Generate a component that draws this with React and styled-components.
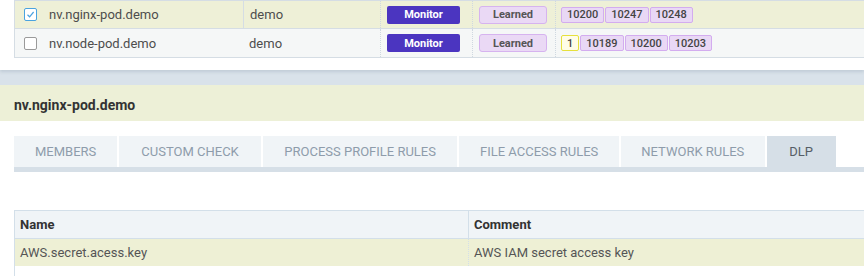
import React from 'react';
import styled, { createGlobalStyle } from 'styled-components';

const GlobalStyle = createGlobalStyle`
    body {
        margin: 0;
        background: #d9e2ea;
        font-family: Roboto, "Liberation Sans", Arial, sans-serif;
        color: #4a4a4a;
    }
`;

const Card = styled.div`
    background: #fff;
    padding: 0 0 12px 14px;
    box-shadow: 0 2px 3px rgba(120, 140, 160, 0.25);
`;

const GroupTable = styled.div`
    border-left: 1px solid #d5dde4;
    border-top: 1px solid #d5dde4;
    border-bottom: 1px solid #d5dde4;
`;

const Row = styled.div`
    display: grid;
    grid-template-columns: 228px 137px 92px 83px 1fr;
    height: ${(p) => (p.$selected ? 27 : 28)}px;
    background: ${(p) => (p.$selected ? '#eef0d7' : '#f5f7f7')};
    border-bottom: ${(p) => (p.$selected ? '1px solid #d5dde4' : 'none')};
`;

const Cell = styled.div`
    display: flex;
    align-items: center;
    gap: 1px;
    padding-left: ${(p) => p.$pad || 6}px;
    font-size: 13px;
    color: #4d4d4d;
    border-left: ${(p) =>
        p.$line === 'solid' ? '1px solid #d5dde4' : p.$line === 'dotted' ? '1px dotted #cfd8e0' : 'none'};
`;

const Check = styled.span`
    width: 11px;
    height: 11px;
    border: 1px solid ${(p) => (p.$on ? '#4aa3df' : '#9a9a9a')};
    border-radius: 2px;
    background: #fff;
    margin-right: 11px;
    display: flex;
    align-items: center;
    justify-content: center;
`;

const Mode = styled.span`
    width: 73px;
    height: 18px;
    border-radius: 2px;
    background: #4b35c0;
    color: #fff;
    font-size: 11px;
    font-weight: 700;
    display: flex;
    align-items: center;
    justify-content: center;
`;

const Profile = styled.span`
    width: 66px;
    height: 16px;
    border-radius: 3px;
    background: #ead9f5;
    border: 1px solid #d6b3ef;
    color: #555;
    font-size: 11px;
    font-weight: 700;
    display: flex;
    align-items: center;
    justify-content: center;
`;

const Port = styled.span`
    height: 14px;
    padding: 0 5px;
    border-radius: 2px;
    background: ${(p) => (p.$alert ? '#fffde6' : '#e9d8f5')};
    border: 1px solid ${(p) => (p.$alert ? '#e6e03c' : '#d3acef')};
    color: #444;
    font-size: 11px;
    font-weight: 500;
    display: flex;
    align-items: center;
`;

const TitleBar = styled.div`
    margin-top: 15px;
    height: 36px;
    box-sizing: border-box;
    padding: 3px 0 0 14px;
    background: #edf0d7;
    display: flex;
    align-items: center;
    font-size: 14px;
    font-weight: 700;
    color: #333;
`;

const Panel = styled.div`
    background: #fff;
    padding: 15px 0 0 14px;
`;

const Tabs = styled.div`
    display: flex;
    gap: 2px;
    border-bottom: 5px solid #d6dfe7;
`;

const Tab = styled.div`
    height: 31px;
    padding: 0 ${(p) => p.$pad}px;
    display: flex;
    align-items: center;
    font-size: 13px;
    background: ${(p) => (p.$active ? '#d6dfe7' : '#f0f4f7')};
    color: ${(p) => (p.$active ? '#555d66' : '#8e9cab')};
`;

const RuleTable = styled.div`
    margin-top: 38px;
    height: 65px;
    border-left: 1px solid #d3dfe9;
    border-top: 1px solid #d3dfe9;
`;

const RuleRow = styled.div`
    display: grid;
    grid-template-columns: 453px 1fr;
    height: 27px;
    background: ${(p) => (p.$head ? '#f0f4f7' : '#eef0d5')};
    border-bottom: ${(p) => (p.$head ? '1px solid #d3dfe9' : 'none')};
    font-size: 13px;
    font-weight: ${(p) => (p.$head ? 700 : 400)};
    color: ${(p) => (p.$head ? '#333' : '#555')};
`;

const RuleCell = styled.div`
    display: flex;
    align-items: center;
    padding-left: 5px;
    border-left: ${(p) => (p.$line ? `1px ${p.$line} #d3dfe9` : 'none')};
`;

const groups = [
    { name: 'nv.nginx-pod.demo', selected: true, ports: ['10200', '10247', '10248'] },
    { name: 'nv.node-pod.demo', selected: false, alert: '1', ports: ['10189', '10200', '10203'] },
];

const tabs = [
    ['MEMBERS', 21],
    ['CUSTOM CHECK', 22],
    ['PROCESS PROFILE RULES', 21.5],
    ['FILE ACCESS RULES', 20.5],
    ['NETWORK RULES', 20.5],
    ['DLP', 22.5],
];

export default function App() {
    return (
        <>
            <GlobalStyle />
            <Card>
                <GroupTable>
                    {groups.map((g) => (
                        <Row key={g.name} $selected={g.selected}>
                            <Cell $pad={9}>
                                <Check $on={g.selected}>
                                    {g.selected && (
                                        <svg width="9" height="9" viewBox="0 0 9 9">
                                            <path d="M1.5 4.8 L3.6 6.8 L7.6 2" fill="none" stroke="#4aa3df" strokeWidth="1.2" />
                                        </svg>
                                    )}
                                </Check>
                                {g.name}
                            </Cell>
                            <Cell $line={g.selected ? 'solid' : null}>demo</Cell>
                            <Cell $line="dotted"><Mode>Monitor</Mode></Cell>
                            <Cell $line="dotted"><Profile>Learned</Profile></Cell>
                            <Cell $line="dotted" $pad={5}>
                                {g.alert && <Port $alert>{g.alert}</Port>}
                                {g.ports.map((p) => <Port key={p}>{p}</Port>)}
                            </Cell>
                        </Row>
                    ))}
                </GroupTable>
            </Card>
            <TitleBar>nv.nginx-pod.demo</TitleBar>
            <Panel>
                <Tabs>
                    {tabs.map(([t, pad]) => (
                        <Tab key={t} $pad={pad} $active={t === 'DLP'}>{t}</Tab>
                    ))}
                </Tabs>
                <RuleTable>
                    <RuleRow $head>
                        <RuleCell>Name</RuleCell>
                        <RuleCell $line="solid">Comment</RuleCell>
                    </RuleRow>
                    <RuleRow>
                        <RuleCell>AWS.secret.acess.key</RuleCell>
                        <RuleCell $line="dotted">AWS IAM secret access key</RuleCell>
                    </RuleRow>
                </RuleTable>
            </Panel>
        </>
    );
}
